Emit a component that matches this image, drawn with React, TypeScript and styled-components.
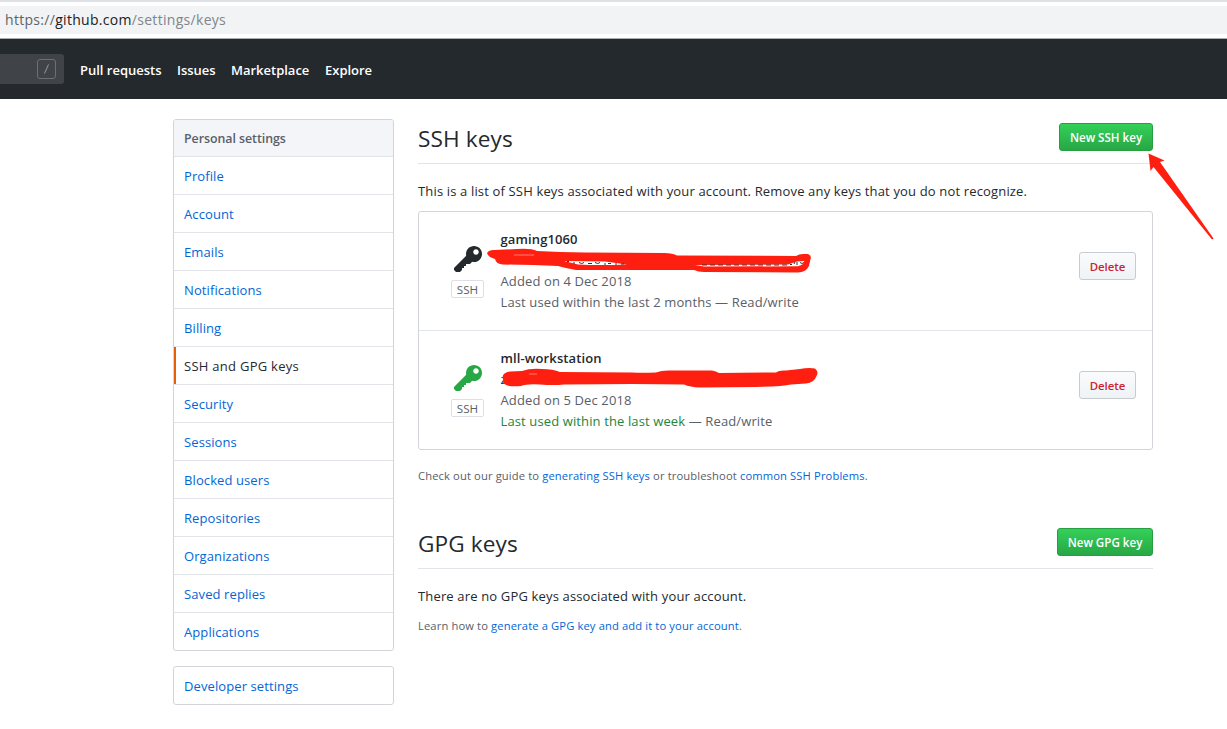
import React from "react";
import styled, { createGlobalStyle } from "styled-components";

const Global = createGlobalStyle`
  * { box-sizing: border-box; }
  html, body { margin: 0; padding: 0; background: #fff; }
  body {
    width: 1227px; height: 729px; overflow: hidden;
    font-family: "Open Sans", "Noto Sans", sans-serif;
    font-size: 13px; line-height: 21px; color: #24292e;
  }
`;

const AddressArea = styled.div`
  height: 39px; padding: 4px 0 3px;
  border-top: 2px solid #dee1e6; border-bottom: 1px solid #a9adaf;
`;
const AddressBar = styled.div`
  height: 28px; padding-left: 5px; background: #f1f3f4; color: #80868b;
  font-size: 14px; line-height: 28px; letter-spacing: 0.3px; white-space: nowrap;
`;
const Scheme = styled.span`color: #5f6368;`;
const Host = styled.span`color: #202124;`;

const Header = styled.header`
  display: flex; align-items: center; height: 60px; background: #24292e;
`;
const SearchBox = styled.div`
  display: flex; justify-content: flex-end; align-items: center;
  width: 64px; height: 30px; padding-right: 8px; margin-right: 16px;
  background: #404448; border-radius: 0 3px 3px 0;
`;
const Nav = styled.nav`display: flex; gap: 16px; padding-top: 2px;`;
const NavLink = styled.a<{ $w: number }>`
  width: ${(p) => p.$w}px; color: #fff; font-weight: 600; font-size: 13px;
  white-space: nowrap; letter-spacing: -0.01px;
`;

const Page = styled.div`display: flex; gap: 24px; padding: 20px 0 0 173px;`;
const Sidebar = styled.aside`width: 221px;`;
const Menu = styled.nav`
  border: 1px solid #d1d5da; border-radius: 3px; overflow: hidden; margin-bottom: 15px;
`;
const MenuHeading = styled.div`
  height: 37px; padding: 0 10px; line-height: 37px; font-weight: 550; font-size: 12.4px;
  letter-spacing: -0.05px;
  color: #586069; background: #f3f5f8; border-bottom: 1px solid #e1e4e8;
`;
const MenuItem = styled.a<{ $active?: boolean }>`
  display: block; height: 38px; padding: 0 10px; line-height: 38px;
  border-bottom: 1px solid #e1e4e8;
  color: ${(p) => (p.$active ? "#24292e" : "#0366d6")};
  font-weight: ${(p) => (p.$active ? 500 : 400)};
  letter-spacing: ${(p) => (p.$active ? 0.27 : 0.1)}px;
  box-shadow: ${(p) => (p.$active ? "inset 2px 0 0 #e36209" : "none")};
  &:last-child { border-bottom: 0; height: 37px; }
`;

const Main = styled.main`width: 735px;`;
const Subhead = styled.div`
  display: flex; justify-content: space-between; align-items: flex-start;
  height: 45px; padding-top: 4px; border-bottom: 1px solid #e1e4e8;
`;
const Title = styled.h2`
  margin: 0; font-size: 22.6px; font-weight: 400; line-height: 31px; letter-spacing: 0.12px;
`;
const GreenButton = styled.button<{ $w: number }>`
  width: ${(p) => p.$w}px; height: 28px; padding: 1px 0 0; border-radius: 3px;
  border: 1px solid #269f42; color: #fff; font: 600 11.6px/26px "Open Sans", sans-serif;
  background: linear-gradient(#34d058, #28a745);
`;
const Intro = styled.p`margin: 17px 0 9px; line-height: 21px; letter-spacing: 0.155px;`;

const KeyList = styled.div`
  border: 1px solid #d1d5da; border-radius: 3px; height: 239px;
`;
const KeyRow = styled.div`
  display: flex; height: 119px; padding: 17px 16px 0 32px;
  &:first-child { border-bottom: 1px solid #e1e4e8; }
`;
const KeyMark = styled.div<{ $color: string }>`
  width: 33px; display: flex; flex-direction: column; align-items: center;
  color: ${(p) => p.$color}; padding: 15px 0 0 0; margin-right: 16.5px;
  svg { display: block; margin-left: 1px; }
`;
const TypeTag = styled.span`
  width: 33px; height: 18px; margin-top: 4px; border: 1px solid #dcdfe3; border-radius: 2px;
  color: #586069; font-size: 11.6px; line-height: 17px; text-align: center;
`;
const Details = styled.div`
  flex: 1; color: #586069; white-space: nowrap; letter-spacing: 0.12px;
`;
const KeyName = styled.div`color: #24292e; font-weight: 550; font-size: 13px;`;
const Fingerprint = styled.div`height: 21px; color: #24292e;`;
const Recent = styled.span`color: #22863a;`;
const DeleteButton = styled.button`
  width: 57px; height: 28px; margin-top: 23px; padding: 1px 0 0; border-radius: 3px;
  border: 1px solid #c9cccf; color: #cb2431; font: 550 11.4px/26px "Open Sans", sans-serif;
  background: linear-gradient(#fafbfc, #eff3f6);
`;
const Note = styled.p<{ $top: number }>`
  margin: ${(p) => p.$top}px 0 0; font-size: 11.2px; line-height: 18px; color: #586069;
  letter-spacing: 0.125px;
  a { color: #0366d6; }
`;
const GpgSection = styled.section`margin-top: 39px;`;
const Markup = styled.svg`
  position: absolute; left: 0; top: 0; width: 1227px; height: 729px; pointer-events: none;
`;

const items = [
  "Profile", "Account", "Emails", "Notifications", "Billing", "SSH and GPG keys", "Security",
  "Sessions", "Blocked users", "Repositories", "Organizations", "Saved replies", "Applications",
];

const KeyIcon = () => (
  <svg width="28" height="32" viewBox="0 0 14 16" fill="currentColor">
    <path fillRule="evenodd" d="M12.83 2.17C12.08 1.42 11.14 1.03 10 1c-1.13.03-2.08.42-2.83 1.17S6.04 3.86 6.01 5c0 .3.03.59.09.89L0 12v1l1 1h2l1-1v-1h1v-1h1v-1h2l1.09-1.11c.3.08.59.11.91.11 1.14-.03 2.08-.42 2.83-1.17S13.97 6.14 14 5c-.03-1.14-.42-2.08-1.17-2.83zM11 5.38c-.77 0-1.38-.61-1.38-1.38 0-.77.61-1.38 1.38-1.38.77 0 1.38.61 1.38 1.38 0 .77-.61 1.38-1.38 1.38z" />
  </svg>
);

const SlashKey = () => (
  <svg width="19" height="20" fill="none" stroke="#6c7074">
    <rect x="0.5" y="0.5" width="18" height="19" rx="2.5" />
    <path d="M11.5 5.5 7.5 14.5" stroke="#979a9c" />
  </svg>
);

export default function App() {
  return (
    <>
      <Global />
      <AddressArea>
        <AddressBar><Scheme>https://</Scheme><Host>github.com</Host>/settings/keys</AddressBar>
      </AddressArea>
      <Header>
        <SearchBox><SlashKey /></SearchBox>
        <Nav>
          <NavLink $w={81}>Pull requests</NavLink>
          <NavLink $w={38}>Issues</NavLink>
          <NavLink $w={78}>Marketplace</NavLink>
          <NavLink $w={48}>Explore</NavLink>
        </Nav>
      </Header>
      <Page>
        <Sidebar>
          <Menu>
            <MenuHeading>Personal settings</MenuHeading>
            {items.map((t) => <MenuItem key={t} $active={t === "SSH and GPG keys"}>{t}</MenuItem>)}
          </Menu>
          <Menu><MenuItem>Developer settings</MenuItem></Menu>
        </Sidebar>
        <Main>
          <Subhead><Title>SSH keys</Title><GreenButton $w={94}>New SSH key</GreenButton></Subhead>
          <Intro>This is a list of SSH keys associated with your account. Remove any keys that you do not recognize.</Intro>
          <KeyList>
            <KeyRow>
              <KeyMark $color="#24292e"><KeyIcon /><TypeTag>SSH</TypeTag></KeyMark>
              <Details>
                <KeyName>gaming1060</KeyName>
                <Fingerprint />
                <div>Added on 4 Dec 2018</div>
                <div>Last used within the last 2 months — Read/write</div>
              </Details>
              <DeleteButton>Delete</DeleteButton>
            </KeyRow>
            <KeyRow>
              <KeyMark $color="#28a745"><KeyIcon /><TypeTag>SSH</TypeTag></KeyMark>
              <Details>
                <KeyName>mll-workstation</KeyName>
                <Fingerprint>z</Fingerprint>
                <div>Added on 5 Dec 2018</div>
                <div><Recent>Last used within the last week</Recent> — Read/write</div>
              </Details>
              <DeleteButton>Delete</DeleteButton>
            </KeyRow>
          </KeyList>
          <Note $top={17}>Check out our guide to <a>generating SSH keys</a> or troubleshoot <a>common SSH Problems</a>.</Note>
          <GpgSection>
            <Subhead><Title>GPG keys</Title><GreenButton $w={96}>New GPG key</GreenButton></Subhead>
            <Intro>There are no GPG keys associated with your account.</Intro>
            <Note $top={10}>Learn how to <a>generate a GPG key and add it to your account</a>.</Note>
          </GpgSection>
        </Main>
      </Page>
      <Markup viewBox="0 0 1227 729">
        <g fill="#ff1f10">
          <path d="M1148.5 153.5 1164.5 160.5 1160 162 1213.5 238.5 1212 239.5 1153.500 167 1150.500 171z" />
          <path fillRule="evenodd" d="M487 253 Q489 249.500 495 250 L517 249 Q531 248 537 251 Q560 252 585 252.500 L664 253 Q673 253 677 255.500 L796 256 Q799 254 803 254 L808 254 Q812 256 810.500 259 L809 266 Q806 272 798 272.500 L704 272 Q698 272 694 270 L576 270 Q565 268 558 266 Q530 265 503 264.500 Q496 264 495 259 Q488 257 487 253z M695 265 L788 264.500 797 261.500 804 261 Q805 264 798 266.300 L704 266.500z M564 261 L605 261.500 627 264.500 Q600 265.500 578 264.500z" />
          <path d="M503 379 Q501 373 510 371.500 L522 371 Q530 368 542 369 Q553 369 560 372 L632 372.500 Q642 373 656 372.500 Q662 370 672 370.500 L712 370.500 Q716 371 719 373 L776 372.500 Q779 370 786 370.500 L800 369 Q808 367.500 815 368.500 Q819 372 816.500 376 Q814 383 806 383.500 L791 384.500 Q783 386.500 756 387 L700 387.500 Q690 387 684 384.500 Q640 383.500 564 384.500 Q554 385.500 540 384.500 Q527 383.500 521 386 Q505 387.500 503 382z" />
        </g>
        <path d="M514 255h20M529 374h8" stroke="#ff8177" strokeWidth="1" />
        <g stroke="#30343a" strokeWidth="1" fill="none">
          <path d="M567 261.500h2M573 263h2M579 262.500q3 2 5 0M588 263.500h4M595 262.500q3 2 5 0M604 264h2M608 263.500h3M615 264h2M621 264h3" />
          <path d="M702 265h86" strokeDasharray="5 3" />
          <path d="M790 264.500h2M794 264l1-2M797 265v-3M800 262.500q2 2 4 0" />
        </g>
      </Markup>
    </>
  );
}
